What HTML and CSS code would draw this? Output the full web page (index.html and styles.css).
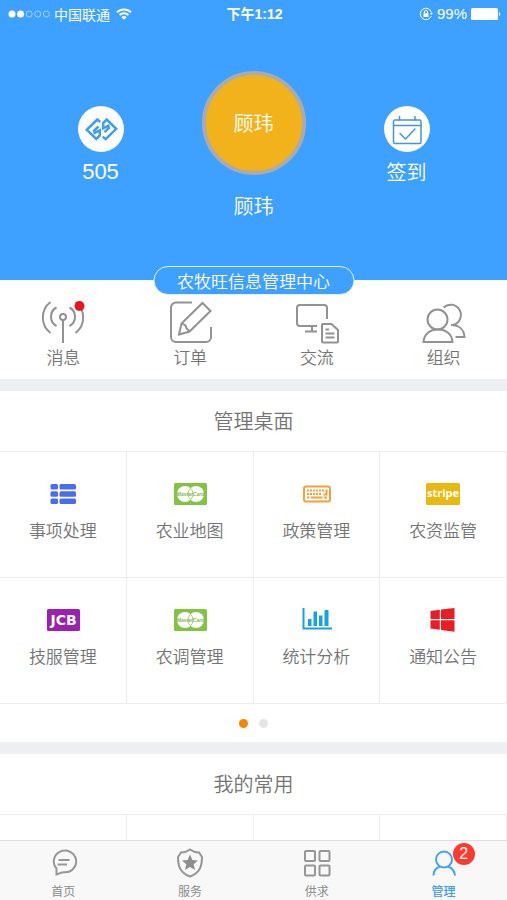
FILE: index.html
```html
<!DOCTYPE html>
<html lang="zh-CN">
<head>
<meta charset="utf-8">
<meta name="viewport" content="width=device-width, initial-scale=1">
<title>管理</title>
<link rel="stylesheet" href="styles.css">
</head>
<body>
<div class="app">
  <main class="content">
    <header class="hero">
      <div class="status">
        <div class="status-left">
          <svg width="42" height="10" viewBox="0 0 42 10" aria-hidden="true">
            <g fill="#fff"><circle cx="4" cy="5" r="3.5"/><circle cx="12.600" cy="5" r="3.500"/></g>
            <g fill="none" stroke="#b5dbff" stroke-width="0.8"><circle cx="21.200" cy="5" r="3"/><circle cx="29.800" cy="5" r="3"/><circle cx="38.400" cy="5" r="3"/></g>
          </svg>
          <span>中国联通</span>
          <svg class="wifi" width="16" height="12" viewBox="0 0 16 12" fill="none" stroke="#fff" stroke-width="1.900" aria-hidden="true">
            <path d="M1 4.300a10 10 0 0 1 14 0M3.600 7a6.300 6.300 0 0 1 8.800 0"/><path d="M8 11.800L5.400 9.200a3.700 3.700 0 0 1 5.200 0z" fill="#fff" stroke="none"/>
          </svg>
        </div>
        <strong class="clock">下午1:12</strong>
        <div class="status-right">
          <svg width="14" height="14" viewBox="0 0 14 14" fill="none" stroke="#fff" aria-hidden="true">
            <path d="M12.300 9A5.700 5.700 0 1 1 12.500 5.500"/><path d="M11 6h3l-1.500 2z" fill="#fff" stroke="none"/><path d="M4.500 6.300h5v3.700h-5z" fill="#fff" stroke="none"/><path d="M5.400 6.500V5a1.600 1.600 0 0 1 3.200 0v1.500"/>
          </svg>
          <span>99%</span>
          <svg width="30" height="12" viewBox="0 0 30 12" fill="#fff" aria-hidden="true"><rect width="27" height="12" rx="1.500"/><path d="M28 4a2.200 2.200 0 0 1 0 4z"/></svg>
        </div>
      </div>
      <div class="profile">
        <a class="side" href="#points">
          <svg width="46" height="46" viewBox="0 0 46 46" fill="none" aria-hidden="true">
            <circle cx="23" cy="23" r="23" fill="#fff"/>
            <g stroke="#3f9eee" stroke-width="2.500"><path d="M22.300 16L19.300 13.500 8.800 23.800 18.300 33 21.800 29.500V24.300L15.500 27.500M15.200 25.500L20.500 20.500"/><path d="M24.700 30.600L27.700 33.100 38.200 22.800 28.700 13.600 25.200 17.100V22.300L31.500 19.100M31.800 21.100L26.500 26.100"/></g>
          </svg>
          <span class="points">505</span>
        </a>
        <div class="person">
          <div class="avatar">顾玮</div>
          <span class="name">顾玮</span>
        </div>
        <a class="side" href="#signin">
          <svg width="46" height="46" viewBox="0 0 46 46" fill="none" stroke="#4795d6" stroke-width="1.500" stroke-linecap="round" stroke-linejoin="round" aria-hidden="true">
            <circle cx="23" cy="23" r="23" fill="#fff" stroke="none"/>
            <rect x="9.500" y="14" width="27.500" height="23.500" rx="1.500"/><path d="M9.500 19.500H37M15.500 10.500V14M31 10.500V14M16 27.500L21.500 33 31 23"/>
          </svg>
          <span>签到</span>
        </a>
      </div>
      <a class="org" href="#org">农牧旺信息管理中心</a>
    </header>

    <nav class="shortcuts" aria-label="快捷入口">
      <a href="#messages">
        <svg width="44" height="44" viewBox="0 0 44 44" aria-hidden="true">
          <circle cx="22" cy="17" r="3"/><path d="M22 20V43M15.500 7.500A10.500 10.500 0 0 0 15.500 26M28.500 7.500A10.500 10.500 0 0 1 28.500 26M9.500 2A19.500 19.500 0 0 0 9.500 33M34.500 2A19.500 19.500 0 0 1 34.500 33"/><circle class="alert" cx="38.500" cy="6" r="5"/>
        </svg>
        <span>消息</span>
      </a>
      <a href="#orders">
        <svg width="44" height="44" viewBox="0 0 44 44" aria-hidden="true">
          <path d="M24 2.500H8a5 5 0 0 0-5 5V37a5 5 0 0 0 5 5H38a5 5 0 0 0 5-5V27"/><path d="M11 34.500L13.500 23.500 34.500 3 42.500 11 21.500 31.500ZM14 23.500L17.500 25.500 18.500 28.500 21.500 31"/>
        </svg>
        <span>订单</span>
      </a>
      <a href="#chat">
        <svg width="44" height="44" viewBox="0 0 44 44" aria-hidden="true">
          <path d="M32 19V8a3 3 0 0 0-3-3H5a3 3 0 0 0-3 3V23a3 3 0 0 0 3 3H22M10 31.500H22M17 26V31"/><path d="M28 24H36.500L43 30V41.500a1 1 0 0 1-1 1H28a1 1 0 0 1-1-1V25a1 1 0 0 1 1-1ZM30.500 29.500H34M30.500 33.500H39.500M30.500 37.500H39.500"/>
        </svg>
        <span>交流</span>
      </a>
      <a href="#members">
        <svg width="44" height="44" viewBox="0 0 44 44" aria-hidden="true">
          <circle cx="15.500" cy="19.500" r="10"/><path d="M1.500 42H30.500C30 34 24 29.500 16 29.500S2 34 1.500 42ZM21.500 7.500A10.300 10.300 0 1 1 31 25M29 25C37 25 42 29.500 42.500 37H33.500"/>
        </svg>
        <span>组织</span>
      </a>
    </nav>

    <section class="panel">
      <h2>管理桌面</h2>
      <div class="grid">
        <a href="#tasks">
          <svg width="34" height="24" viewBox="0 0 34 24" fill="#4b6ceb" aria-hidden="true"><rect x="4.500" y="2" width="7.500" height="5.500" rx="1.500"/><rect x="13.500" y="2" width="16.500" height="5.500" rx="1.500"/><rect x="4.500" y="9.200" width="7.500" height="5.500" rx="1.500"/><rect x="13.500" y="9.200" width="16.500" height="5.500" rx="1.500"/><rect x="4.500" y="16.400" width="7.500" height="5.500" rx="1.500"/><rect x="13.500" y="16.400" width="16.500" height="5.500" rx="1.500"/></svg>
          <span>事项处理</span>
        </a>
        <a href="#map">
          <svg width="34" height="24" viewBox="0 0 34 24" aria-hidden="true"><rect x="1" y="1" width="33" height="22" rx="1.500" fill="#82c341"/><circle cx="12" cy="12" r="8" fill="#fff"/><circle cx="23" cy="12" r="8" fill="#fff"/><path d="M17.500 6.200A8 8 0 0 0 17.500 17.800M17.500 6.200A8 8 0 0 1 17.500 17.800" fill="none" stroke="#a9d47e"/><text class="mc" x="17.500" y="14">MasterCard</text></svg>
          <span>农业地图</span>
        </a>
        <a href="#policy">
          <svg width="34" height="24" viewBox="0 0 34 24" fill="none" stroke="#f6a03a" aria-hidden="true"><rect x="5" y="4.500" width="26" height="15" rx="2" stroke-width="2"/><path d="M8 8.500H25M8 12H22" stroke-width="2" stroke-dasharray="2 1"/><path d="M8 15.500H10.500M12 15.500H23.500M25 15.500H28M27.500 7.500V12.500H24.500" stroke-width="2"/></svg>
          <span>政策管理</span>
        </a>
        <a href="#supplies">
          <svg width="34" height="24" viewBox="0 0 34 24" aria-hidden="true"><rect y="1" width="34" height="22" rx="1.500" fill="#e9b90f"/><text class="stripe" x="17" y="15">stripe</text></svg>
          <span>农资监管</span>
        </a>
        <a href="#service">
          <svg width="34" height="24" viewBox="0 0 34 24" aria-hidden="true"><rect x="1" y="1" width="33" height="22" rx="1.500" fill="#9a22ae"/><text class="jcb" x="17.500" y="17">JCB</text></svg>
          <span>技服管理</span>
        </a>
        <a href="#survey">
          <svg width="34" height="24" viewBox="0 0 34 24" aria-hidden="true"><rect x="1" y="1" width="33" height="22" rx="1.500" fill="#82c341"/><circle cx="12" cy="12" r="8" fill="#fff"/><circle cx="23" cy="12" r="8" fill="#fff"/><path d="M17.500 6.200A8 8 0 0 0 17.500 17.800M17.500 6.200A8 8 0 0 1 17.500 17.800" fill="none" stroke="#a9d47e"/><text class="mc" x="17.500" y="14">MasterCard</text></svg>
          <span>农调管理</span>
        </a>
        <a href="#stats">
          <svg width="34" height="24" viewBox="0 0 34 24" fill="#18a0e4" aria-hidden="true"><path d="M3.500 0H5.500V19.500H33V21.500H3.500ZM9 11H12.500V18H9ZM14.500 3.500H18V18H14.500ZM20 7.500H23.500V18H20ZM25.500 2H29.500V18H25.500Z"/></svg>
          <span>统计分析</span>
        </a>
        <a href="#notices">
          <svg width="34" height="24" viewBox="0 0 34 24" fill="#ea1c24" aria-hidden="true"><path d="M4.500 3L13.800 1.700V11H4.500ZM15 1.500L28.500 0V11H15ZM4.500 12.200H13.800V21.700L4.500 20.500ZM15 12.200H28.500V23.700L15 21.900Z"/></svg>
          <span>通知公告</span>
        </a>
      </div>
      <div class="pager"><i class="on"></i><i></i></div>
    </section>

    <section class="panel">
      <h2>我的常用</h2>
      <div class="grid">
        <a href="#f1" aria-label="常用一"></a><a href="#f2" aria-label="常用二"></a><a href="#f3" aria-label="常用三"></a><a href="#f4" aria-label="常用四"></a>
      </div>
    </section>
  </main>

  <nav class="tabs" aria-label="主导航">
    <a href="#home">
      <svg width="30" height="30" viewBox="0 0 30 30" aria-hidden="true"><path d="M8.500 20.500A11.200 10.800 0 1 1 16 24.200C13 24.200 11 26 8.500 26.500ZM10.500 12H21.500M9.500 16.500H19"/></svg>
      <span>首页</span>
    </a>
    <a href="#services">
      <svg width="30" height="30" viewBox="0 0 30 30" aria-hidden="true"><path d="M15 1.500Q19 4.500 24 4.500L27 9C27 18 25 25 15 28.500C5 25 3 18 3 9L6 4.500Q11 4.500 15 1.500Z"/><path class="solid" d="M15 6.500L17.400 12 23 12.500 18.700 16.300 20 22 15 19 10 22 11.300 16.300 7 12.500 12.600 12Z"/></svg>
      <span>服务</span>
    </a>
    <a href="#supply">
      <svg width="30" height="30" viewBox="0 0 30 30" aria-hidden="true"><rect x="3" y="3" width="10" height="10" rx="1"/><rect x="17.500" y="3" width="10" height="10" rx="1"/><rect x="3" y="17.500" width="10" height="10" rx="1"/><rect x="17.500" y="17.500" width="10" height="10" rx="1"/></svg>
      <span>供求</span>
    </a>
    <a class="active" href="#manage" aria-current="page">
      <span class="icon">
        <svg width="30" height="30" viewBox="0 0 30 30" aria-hidden="true"><circle cx="15" cy="11.500" r="8"/><path d="M4.500 27.500C4.500 23 7 20 11 18.500M19 18.500C23 20 25.500 23 26 27.500"/></svg>
        <b class="badge">2</b>
      </span>
      <span>管理</span>
    </a>
  </nav>
</div>
</body>
</html>
```

FILE: styles.css
```css
* { box-sizing: border-box; }

body {
  margin: 0;
  background: #fff;
  color: #747474;
  font-family: "Noto Sans CJK SC", sans-serif;
  font-weight: 350;
}

a { color: inherit; text-decoration: none; }
svg { display: block; flex: none; }

.app {
  display: flex;
  flex-direction: column;
  height: 100vh;
}

.content {
  flex: 1;
  min-height: 0;
  overflow-y: auto;
  scrollbar-width: none;
}

/* Header */
.hero {
  position: relative;
  padding-bottom: 59px;
  background: #3fa1ff;
  color: #fff;
}

.status {
  display: grid;
  grid-template-columns: 1fr auto 1fr;
  align-items: center;
  height: 28px;
  padding: 0 6px 0 8px;
  font-size: 15px;
  font-weight: 400;
  line-height: 20px;
}
.status-left, .status-right { display: flex; align-items: center; gap: 4px; }
.status-left { font-size: 14px; }
.wifi { margin-left: 2px; }
.status-right { justify-content: flex-end; font-family: "Liberation Sans", sans-serif; }
.clock { font-family: "Liberation Sans", "Noto Sans CJK SC", sans-serif; font-size: 14px; font-weight: 700; }

.profile {
  display: grid;
  grid-template-columns: repeat(3, 1fr);
  padding: 43px 24px 0;
}
.side, .person { display: flex; flex-direction: column; align-items: center; }
.side {
  gap: 6px;
  padding-top: 35px;
  font-size: 20px;
  line-height: 28px;
}
.points { font-family: "Liberation Sans", sans-serif; font-size: 22px; }
.person { gap: 16px; font-size: 20px; line-height: 30px; }
.avatar {
  display: grid;
  place-items: center;
  width: 104px;
  height: 104px;
  border: 4px solid #a9abad;
  border-radius: 50%;
  background: #f1b21c;
}
.org {
  position: absolute;
  bottom: -15px;
  left: 50%;
  transform: translateX(-50%);
  padding: 0 23px;
  border: 1px solid #e4f2ff;
  border-radius: 15px;
  background: #3fa1ff;
  font-size: 17px;
  line-height: 27px;
  white-space: nowrap;
}

/* Shortcuts */
.shortcuts {
  display: grid;
  grid-template-columns: repeat(4, 1fr);
  padding: 20px 0 9px;
  font-size: 17px;
  line-height: 26px;
}
.shortcuts a { display: flex; flex-direction: column; align-items: center; }
.shortcuts svg { fill: none; stroke: #929292; stroke-width: 2; }
.shortcuts .alert { fill: #ea1420; stroke: none; }

/* Panels */
.panel { border-top: 12px solid #eeeff2; }
.panel h2 {
  margin: 0;
  font-size: 20px;
  font-weight: inherit;
  line-height: 60px;
  text-align: center;
}
.grid {
  display: grid;
  grid-template-columns: repeat(4, 1fr);
  grid-auto-rows: 126px;
  border-top: 1px solid #ededed;
}
.grid a {
  display: flex;
  flex-direction: column;
  align-items: center;
  gap: 12px;
  padding-top: 30px;
  border-right: 1px solid #ededed;
  border-bottom: 1px solid #ededed;
  font-size: 17px;
  line-height: 24px;
}
.grid text { fill: #fff; text-anchor: middle; font-weight: 700; }
.grid .mc { fill: #82b653; font: italic 700 5px "Liberation Sans", sans-serif; }
.grid .stripe { font-family: "Open Sans", sans-serif; font-size: 11px; }
.grid .jcb { font-family: "DejaVu Sans", sans-serif; font-size: 14px; }

.pager {
  display: flex;
  justify-content: center;
  gap: 11px;
  padding: 15px 0 14px;
}
.pager i { width: 9px; height: 9px; border-radius: 50%; background: #e5e5e5; }
.pager .on { background: #f98405; }

/* Tab bar */
.tabs {
  display: grid;
  grid-template-columns: repeat(4, 1fr);
  padding: 7px 0 0;
  border-top: 1px solid #dedede;
  background: #f8f8f8;
  color: #8c8c8c;
  font-size: 12px;
  font-weight: 400;
  line-height: 18px;
}
.tabs a { display: flex; flex-direction: column; align-items: center; gap: 4px; }
.tabs svg { fill: none; stroke: #969696; stroke-width: 2; }
.tabs .solid { fill: #8e8e8e; stroke: none; }
.tabs .active { color: #3d9bf0; font-weight: 500; }
.tabs .active svg { stroke: #45a0f0; }
.icon { position: relative; }
.badge {
  position: absolute;
  top: -5px;
  left: 24px;
  width: 22px;
  border-radius: 50%;
  background: #fb3b30;
  color: #fff;
  font: 400 16px/22px "Liberation Sans", sans-serif;
  text-align: center;
}
```
